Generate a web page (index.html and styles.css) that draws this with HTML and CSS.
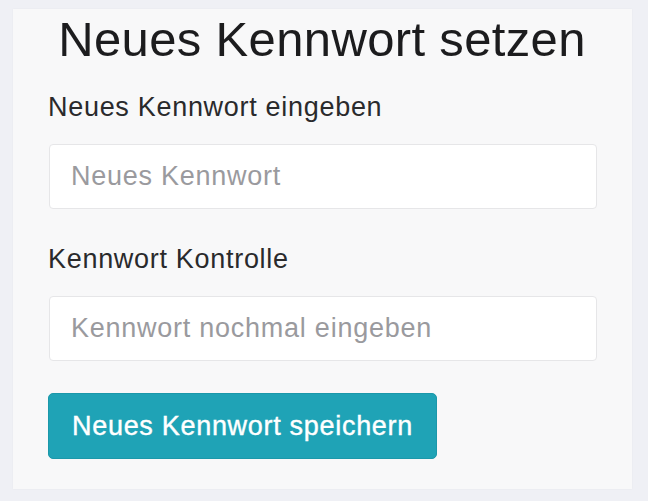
FILE: index.html
```html
<!DOCTYPE html>
<html lang="de">
<head>
    <meta charset="UTF-8">
    <meta name="viewport" content="width=device-width, initial-scale=1.0">
    <title>Neues Kennwort setzen</title>
    <link rel="stylesheet" href="styles.css">
</head>
<body>
    <div class="card">
        <h1>Neues Kennwort setzen</h1>
        <form class="reset-form" onsubmit="return false;">
            <div class="form-group">
                <label for="pw1">Neues Kennwort eingeben</label>
                <input type="password" id="pw1" class="form-input" placeholder="Neues Kennwort">
            </div>
            <div class="form-group">
                <label for="pw2">Kennwort Kontrolle</label>
                <input type="password" id="pw2" class="form-input" placeholder="Kennwort nochmal eingeben">
            </div>
            <button type="submit" class="btn">Neues Kennwort speichern</button>
        </form>
    </div>
</body>
</html>
```

FILE: styles.css
```css
body {
    font-family: "Liberation Sans", Arial, sans-serif;
    margin: 0;
    padding: 9px 16px 12px 13px;
    background-color: #eff0f5;
    color: #333333;
}
.card {
    background-color: #f8f8f9;
    padding: 4px 36px 30px 35px;
    height: 480px;
    box-sizing: border-box;
    box-shadow: 0 0 2px rgba(0,0,0,0.04);
}
h1 {
    margin: 0;
    font-size: 49px;
    line-height: 52px;
    font-weight: normal;
    letter-spacing: 0.35px;
    text-align: center;
    color: #1c1c1e;
}
.reset-form {
    display: flex;
    flex-direction: column;
    align-items: flex-start;
    margin-top: 27px;
}
.form-group {
    display: flex;
    flex-direction: column;
    gap: 22px;
    width: 100%;
    margin-bottom: 35px;
}
.form-group:nth-child(2) {
    margin-bottom: 32px;
}
label {
    font-size: 27px;
    line-height: 30px;
    letter-spacing: 0.7px;
    color: #2a2a2c;
}
.form-input {
    height: 65px;
    width: 100%;
    margin-left: 1px;
    box-sizing: border-box;
    padding: 0 21px;
    border: 1px solid #e6e6e8;
    border-radius: 4px;
    background-color: #ffffff;
    font-family: inherit;
    font-size: 27px;
    letter-spacing: 0.75px;
    color: #333333;
    outline: none;
}
.form-input::placeholder {
    color: #9a9a9e;
}
.btn {
    height: 66px;
    padding: 0 23px;
    background-color: #1fa3b6;
    border: 1px solid #1b98aa;
    border-radius: 5px;
    color: #ffffff;
    font-family: inherit;
    font-size: 27px;
    letter-spacing: 0.7px;
    -webkit-text-stroke: 0.4px #ffffff;
    cursor: pointer;
}
.btn:hover {
    background-color: #1b93a5;
}
```
